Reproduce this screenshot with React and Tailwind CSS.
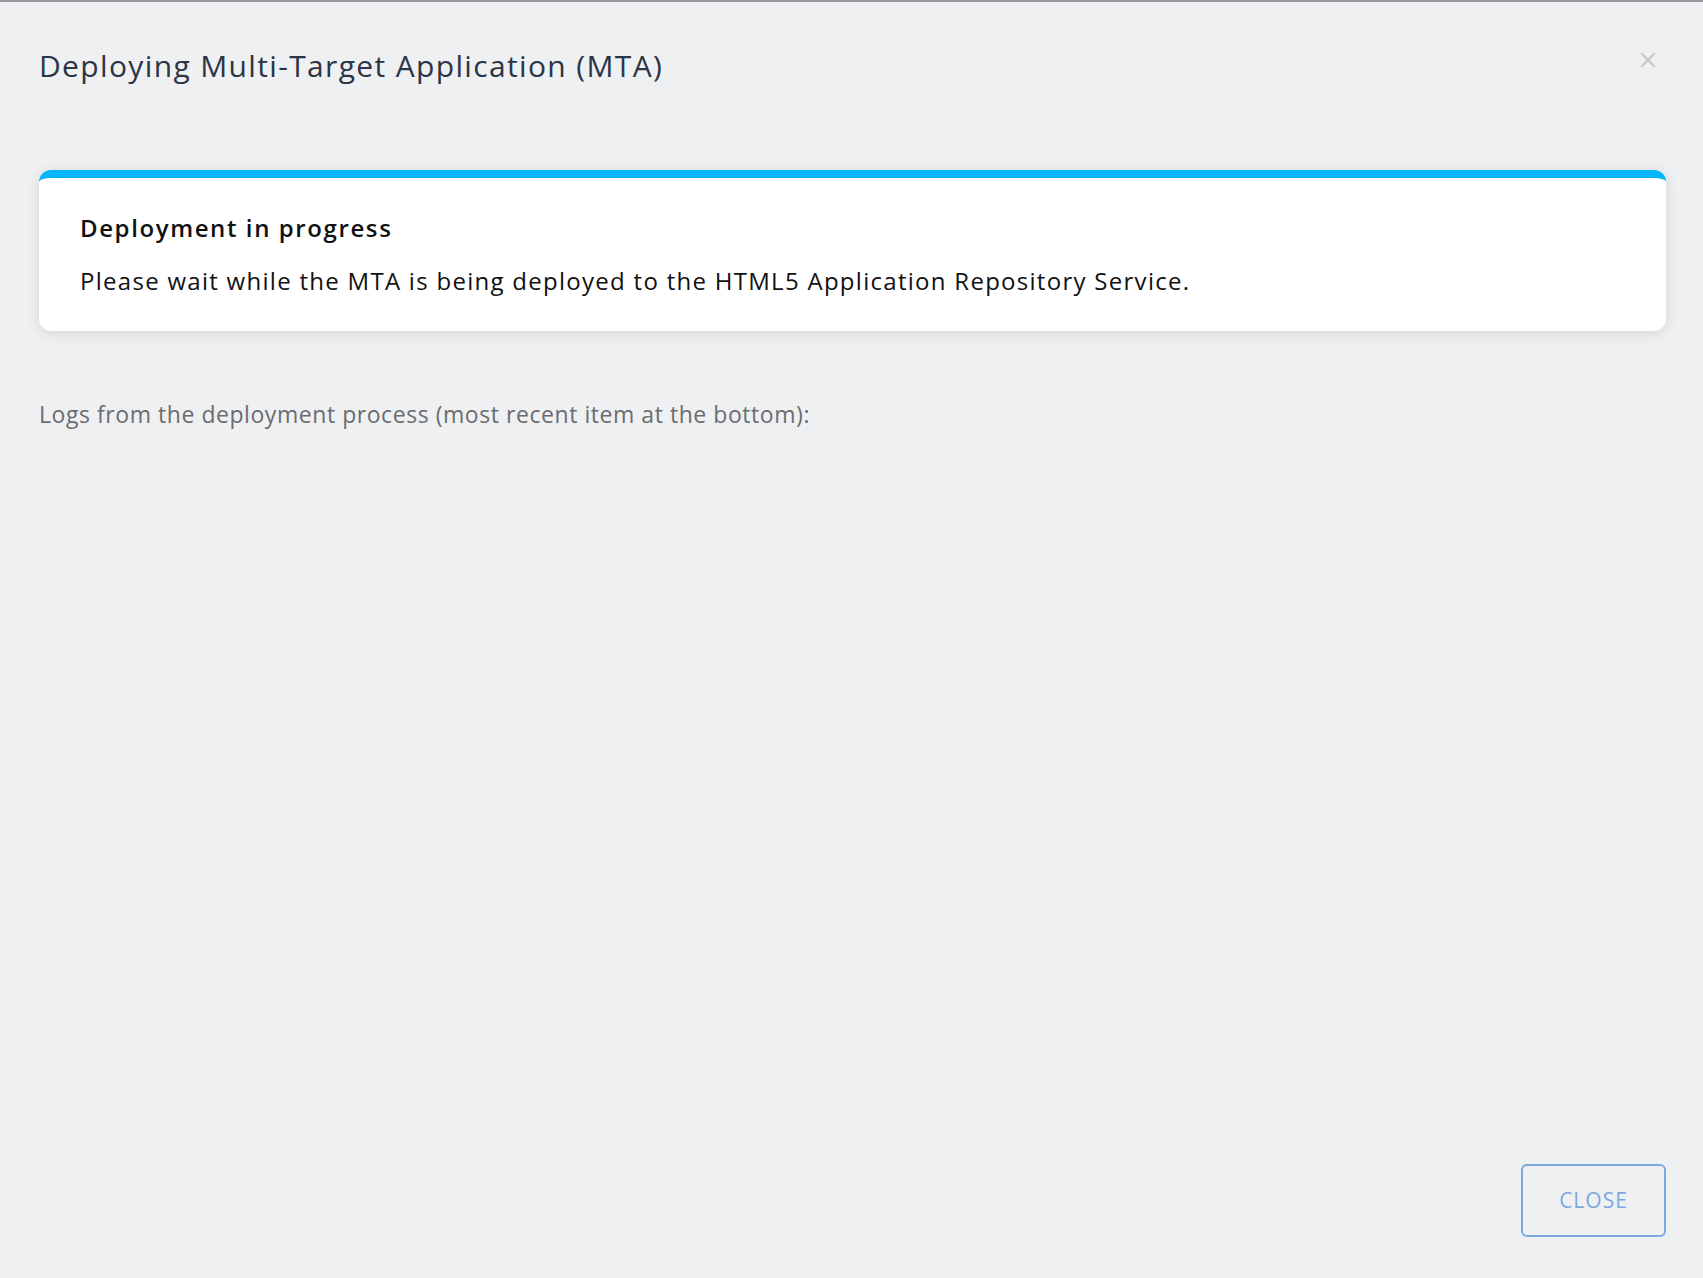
export default function App() {
  return (
    <div
      className="flex h-[1278px] w-full flex-col border-t-2 border-[#999b9e] bg-[#eff0f2] px-[39px] pr-[37px]"
      style={{ fontFamily: "'Open Sans', Lato, sans-serif" }}
    >
      {/* Header */}
      <div className="flex items-start justify-between pt-[46px]">
        <h1 className="text-[30px] leading-[36px] font-normal tracking-[1.35px] text-[#2c3545]">
          Deploying Multi-Target Application (MTA)
        </h1>
        <button className="mt-[4px] mr-[10px] text-[#c4c6c9]" aria-label="Close">
          <svg width="16" height="16" viewBox="0 0 16 16" fill="none">
            <path d="M2 2L14 14M14 2L2 14" stroke="currentColor" strokeWidth="2.2" strokeLinecap="round" />
          </svg>
        </button>
      </div>

      {/* Status card */}
      <div className="mt-[86px] rounded-[12px] border-t-[8px] border-[#06b6fb] bg-white px-[41px] pt-[35px] pb-[35px] shadow-[0_2px_14px_rgba(0,0,0,0.12)]">
        <h2 className="text-[24px] leading-[30px] font-semibold tracking-[1.6px] text-[#111]">
          Deployment in progress
        </h2>
        <p className="mt-[23px] text-[24px] leading-[30px] tracking-[1.28px] text-[#111]">
          Please wait while the MTA is being deployed to the HTML5 Application Repository Service.
        </p>
      </div>

      <p className="mt-[68px] text-[23px] leading-[30px] tracking-[0.55px] text-[#6a6d70]">
        Logs from the deployment process (most recent item at the bottom):
      </p>

      <div className="flex-1" />

      {/* Footer */}
      <div className="flex justify-end pb-[41px]">
        <button className="h-[73px] w-[145px] rounded-[6px] border-2 border-[#7ba8e0] text-[21px] tracking-[1px] text-[#7ba8e0]">
          CLOSE
        </button>
      </div>
    </div>
  );
}
